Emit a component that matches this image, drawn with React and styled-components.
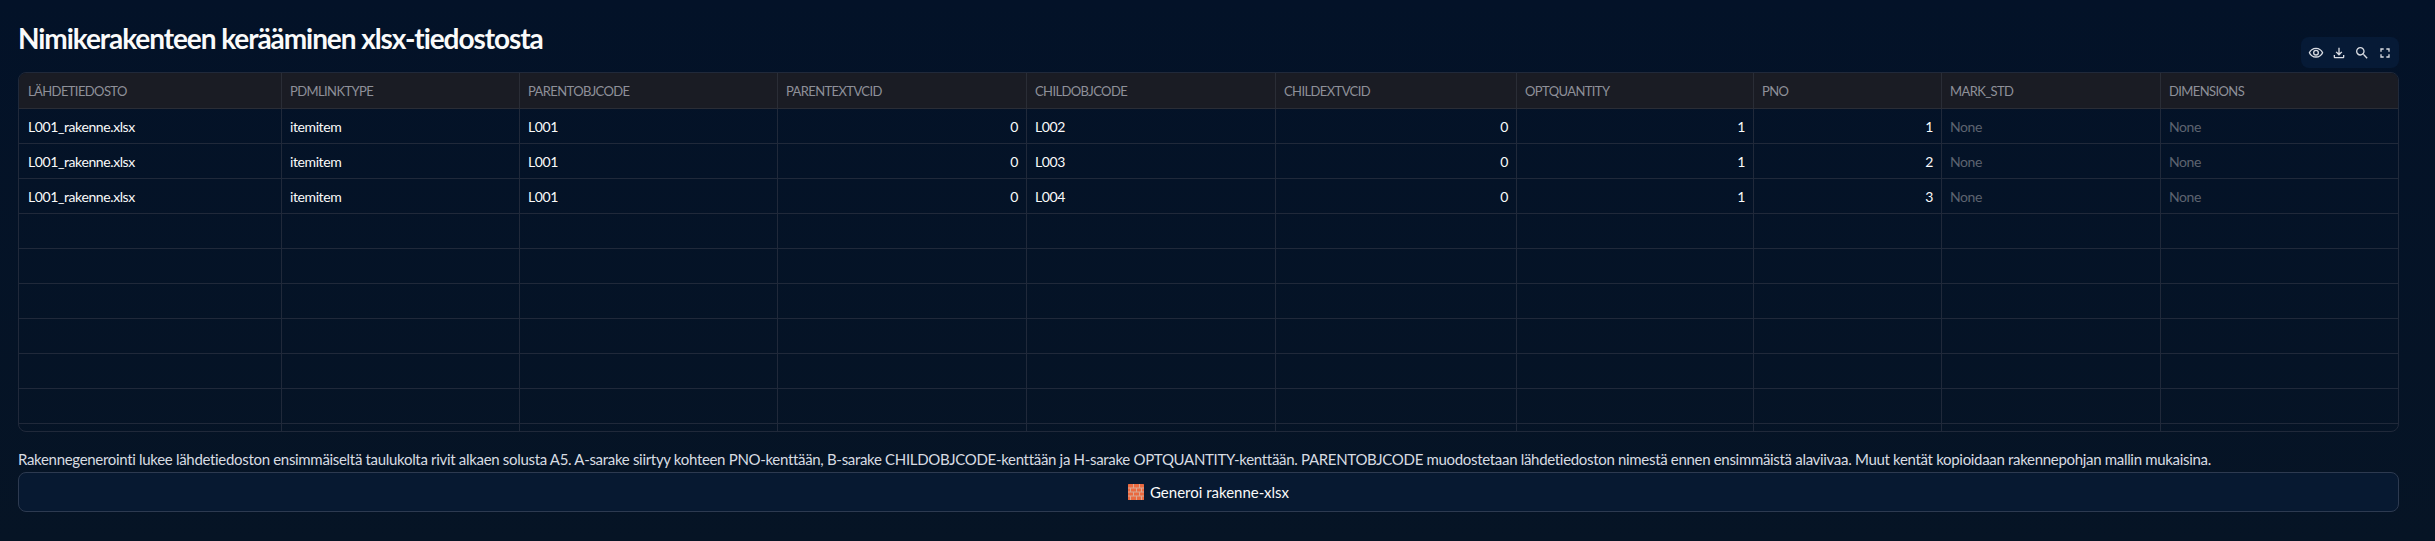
import React from "react";
import styled, { createGlobalStyle } from "styled-components";

const Global = createGlobalStyle`
  html, body { margin: 0; padding: 0; background: #041225; }
  body { font-family: "Lato", "Noto Sans", "Liberation Sans", sans-serif; color: #fafafa; }
`;

const Page = styled.main`
  width: 2435px;
  height: 541px;
  box-sizing: border-box;
  padding: 0 36px 0 18px;
  background: linear-gradient(180deg, #031228 0%, #061425 100%);
  overflow: hidden;
`;

const Title = styled.h1`
  margin: 0;
  padding-top: 20px;
  height: 50px;
  box-sizing: border-box;
  font-size: 28px;
  line-height: 36px;
  font-weight: 700;
  letter-spacing: -1.07px;
  color: #fafafa;
`;

const TableWrap = styled.div`
  position: relative;
  margin-top: 22px;
`;

const Toolbar = styled.div`
  position: absolute;
  top: -35px;
  right: 0;
  width: 98px;
  height: 31px;
  border-radius: 8px;
  background: #061a36;
  display: flex;
  align-items: center;
  justify-content: space-around;
  padding: 0 3px;
  box-sizing: border-box;
`;

const ToolIcon = styled.svg`
  width: 16px;
  height: 16px;
  fill: #d9dce2;
  display: block;
`;

const Table = styled.div`
  height: 360px;
  box-sizing: border-box;
  border: 1px solid #20293a;
  border-radius: 8px;
  overflow: hidden;
  display: grid;
  grid-template-columns: 263px 238px 258px 249px 249px 241px 237px 188px 219px 1fr;
  grid-template-rows: 36px;
  grid-auto-rows: 35px;
  font-size: 14px;
  letter-spacing: -0.4px;
`;

const HeadCell = styled.div`
  box-sizing: border-box;
  padding: 0 8px;
  display: flex;
  align-items: center;
  background: #1a1c24;
  color: #8e9099;
  font-size: 13px;
  letter-spacing: -0.6px;
  border-right: 1px solid #2a2d36;
  border-bottom: 1px solid #2a2d36;
  &:nth-child(10) { border-right: 0; }
  &:first-child { padding-left: 9px; }
`;

const Cell = styled.div`
  box-sizing: border-box;
  padding: 0 8px;
  display: flex;
  align-items: center;
  justify-content: ${(p) => (p.$num ? "flex-end" : "flex-start")};
  color: ${(p) => (p.$none ? "#5d6370" : "#fafafa")};
  border-right: 1px solid #20293a;
  border-bottom: 1px solid #20293a;
  &:nth-child(10n) { border-right: 0; }
  &:nth-child(10n + 1) { padding-left: 9px; }
`;

const Note = styled.p`
  margin: 15px 0 0;
  height: 25px;
  font-size: 15px;
  line-height: 25px;
  letter-spacing: -0.315px;
  color: #d8dce2;
  white-space: nowrap;
`;

const Action = styled.button`
  display: flex;
  align-items: center;
  justify-content: center;
  gap: 6px;
  width: 100%;
  height: 40px;
  border: 1px solid #2d3a50;
  border-radius: 8px;
  background: #071931;
  color: #fafafa;
  font-family: inherit;
  font-size: 15px;
`;

const Brick = styled.svg`
  width: 16px;
  height: 16px;
  display: block;
`;

const cols = ["LÄHDETIEDOSTO", "PDMLINKTYPE", "PARENTOBJCODE", "PARENTEXTVCID", "CHILDOBJCODE", "CHILDEXTVCID", "OPTQUANTITY", "PNO", "MARK_STD", "DIMENSIONS"];
const rows = [
  ["L002", "1"],
  ["L003", "2"],
  ["L004", "3"],
];

const toolPaths = [
  "M12 6a9.8 9.8 0 0 1 8.8 5.5A9.8 9.8 0 0 1 12 17a9.8 9.8 0 0 1-8.8-5.5A9.8 9.8 0 0 1 12 6m0-2C7 4 2.7 7.1 1 11.5 2.7 15.9 7 19 12 19s9.3-3.1 11-7.5C21.3 7.1 17 4 12 4zm0 5a2.5 2.5 0 1 1 0 5 2.5 2.5 0 0 1 0-5m0-2a4.5 4.5 0 1 0 0 9 4.5 4.5 0 0 0 0-9z",
  "M18 15v3H6v-3H4v3c0 1.1.9 2 2 2h12c1.1 0 2-.9 2-2v-3h-2zm-1-4-1.41-1.41L13 12.17V4h-2v8.17L8.41 9.59 7 11l5 5 5-5z",
  "M15.5 14h-.79l-.28-.27A6.47 6.47 0 0 0 16 9.5 6.5 6.5 0 1 0 9.5 16c1.61 0 3.09-.59 4.23-1.57l.27.28v.79l5 4.99L20.49 19l-4.99-5zm-6 0C7.01 14 5 11.99 5 9.5S7.01 5 9.5 5 14 7.01 14 9.5 11.99 14 9.5 14z",
  "M7 14H5v5h5v-2H7v-3zm-2-4h2V7h3V5H5v5zm12 7h-3v2h5v-5h-2v3zM14 5v2h3v3h2V5h-5z",
];

export default function App() {
  const emptyCells = Array.from({ length: 70 });
  return (
    <Page>
      <Global />
      <Title>Nimikerakenteen kerääminen xlsx-tiedostosta</Title>
      <TableWrap>
        <Toolbar>
          {toolPaths.map((d) => (
            <ToolIcon viewBox="0 0 24 24" key={d}>
              <path d={d} />
            </ToolIcon>
          ))}
        </Toolbar>
        <Table>
          {cols.map((c) => (
            <HeadCell key={c}>{c}</HeadCell>
          ))}
          {rows.map(([child, pno]) => (
            <React.Fragment key={child}>
              <Cell>L001_rakenne.xlsx</Cell>
              <Cell>itemitem</Cell>
              <Cell>L001</Cell>
              <Cell $num>0</Cell>
              <Cell>{child}</Cell>
              <Cell $num>0</Cell>
              <Cell $num>1</Cell>
              <Cell $num>{pno}</Cell>
              <Cell $none>None</Cell>
              <Cell $none>None</Cell>
            </React.Fragment>
          ))}
          {emptyCells.map((_, i) => (
            <Cell key={i} />
          ))}
        </Table>
      </TableWrap>
      <Note>
        Rakennegenerointi lukee lähdetiedoston ensimmäiseltä taulukolta rivit alkaen solusta A5. A-sarake siirtyy kohteen PNO-kenttään, B-sarake CHILDOBJCODE-kenttään ja H-sarake OPTQUANTITY-kenttään. PARENTOBJCODE muodostetaan lähdetiedoston nimestä ennen ensimmäistä alaviivaa. Muut kentät kopioidaan rakennepohjan mallin mukaisina.
      </Note>
      <Action>
        <Brick viewBox="0 0 16 16">
          <rect width="16" height="16" rx="0.5" fill="#ea6a40" />
          <path d="M0 4h16M0 8h16M0 12h16M5.5 0v4M11.5 0v4M2.5 4v4M8.5 4v4M13.5 4v4M5.5 8v4M11.5 8v4M2.5 12v4M8.5 12v4M13.5 12v4" stroke="#d9a893" strokeWidth="1" fill="none" />
        </Brick>
        Generoi rakenne-xlsx
      </Action>
    </Page>
  );
}
